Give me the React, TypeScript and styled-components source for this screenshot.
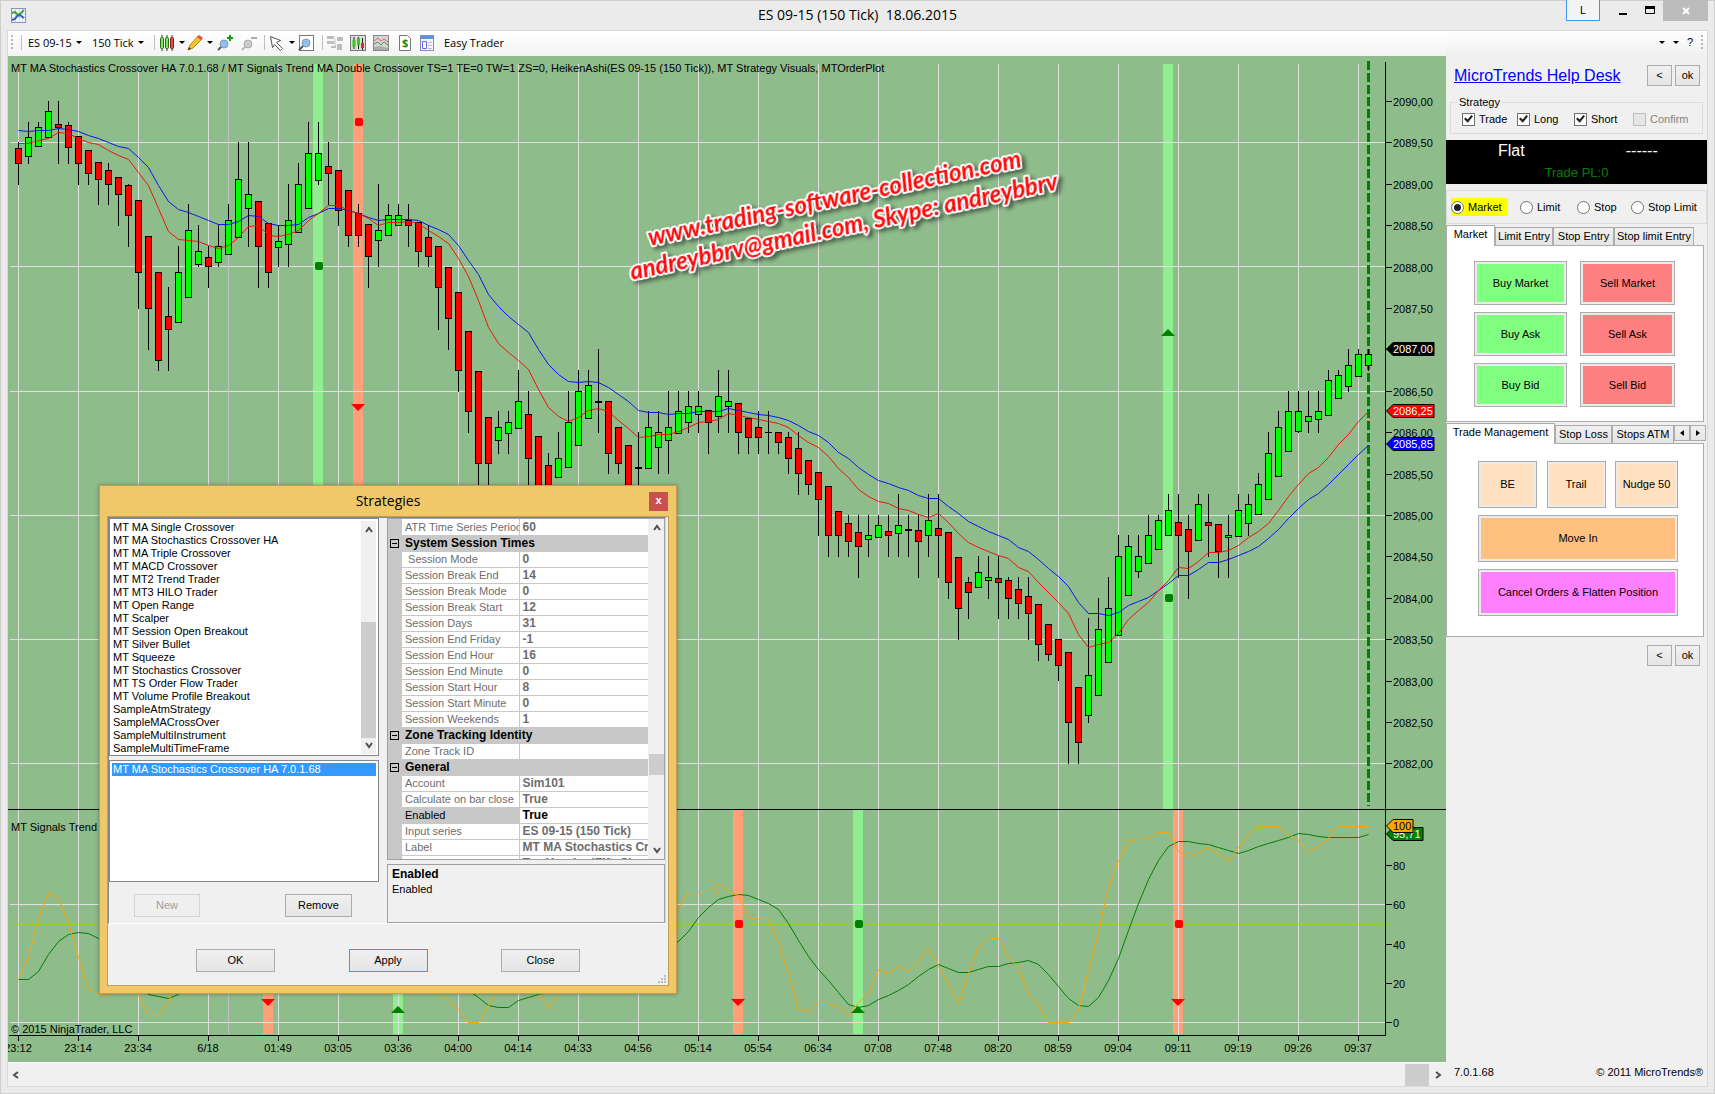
import React from "react";
import styled, { createGlobalStyle, css } from "styled-components";

const GlobalStyle = createGlobalStyle`
  * { box-sizing: border-box; }
  html, body { margin: 0; height: 100%; }
  body {
    font-family: "Liberation Sans", Arial, sans-serif;
    font-size: 11px;
    line-height: 13px;
    color: #000;
    background: #ebebeb;
    overflow: hidden;
  }
  button, input { font: inherit; color: inherit; margin: 0; }
`;

/* ---------- chart data: [high, bodyTop, bodyBottom, low, kind] ---------- */

type Candle = [number, number, number, number, "G" | "R" | "K"];

const candles: Candle[] = [
  [142, 148, 164, 185, "R"], [122, 137, 157, 164, "G"], [122, 127, 147, 147, "G"], [101, 111, 138, 138, "G"],
  [101, 124, 128, 164, "R"], [122, 125, 148, 164, "R"], [136, 136, 164, 185, "R"], [150, 150, 174, 185, "R"],
  [162, 162, 180, 205, "R"], [163, 170, 185, 205, "R"], [177, 177, 195, 226, "R"], [184, 185, 216, 247, "R"],
  [200, 200, 273, 309, "R"], [236, 236, 309, 350, "R"], [272, 272, 361, 371, "R"], [287, 316, 330, 371, "R"],
  [246, 272, 323, 323, "G"], [204, 230, 298, 298, "G"], [225, 251, 265, 267, "G"], [246, 257, 267, 288, "R"],
  [225, 246, 263, 267, "G"], [204, 220, 255, 255, "G"], [142, 179, 238, 238, "G"], [142, 194, 209, 247, "G"],
  [201, 201, 247, 288, "R"], [223, 223, 273, 288, "R"], [225, 241, 248, 267, "G"], [184, 220, 245, 267, "G"],
  [163, 184, 233, 233, "G"], [122, 153, 209, 209, "G"], [122, 153, 181, 185, "G"], [142, 166, 174, 205, "R"],
  [170, 170, 211, 226, "R"], [190, 190, 236, 247, "R"], [204, 213, 236, 247, "R"], [224, 224, 257, 288, "R"],
  [184, 230, 241, 267, "G"], [204, 215, 236, 236, "G"], [204, 215, 226, 226, "G"], [204, 220, 226, 247, "R"],
  [222, 222, 252, 267, "R"], [225, 237, 257, 267, "R"], [246, 246, 288, 330, "R"], [267, 267, 319, 350, "R"],
  [292, 292, 371, 392, "R"], [331, 331, 412, 433, "R"], [371, 371, 464, 500, "R"], [417, 417, 464, 500, "R"],
  [411, 427, 441, 454, "G"], [411, 422, 434, 454, "G"], [370, 401, 429, 429, "G"], [391, 414, 459, 490, "R"],
  [436, 436, 490, 495, "R"], [453, 465, 490, 495, "R"], [432, 458, 478, 478, "G"], [391, 422, 468, 468, "G"],
  [370, 391, 446, 446, "G"], [370, 385, 419, 419, "G"], [349, 401, 403, 433, "K"], [401, 401, 454, 474, "R"],
  [427, 427, 464, 474, "R"], [445, 445, 490, 495, "R"], [432, 467, 469, 495, "K"], [411, 427, 469, 469, "G"],
  [411, 432, 448, 474, "G"], [391, 427, 441, 474, "G"], [391, 411, 434, 434, "G"], [391, 406, 423, 433, "G"],
  [391, 406, 415, 433, "G"], [410, 410, 423, 454, "R"], [370, 396, 417, 433, "G"], [370, 401, 407, 433, "G"],
  [403, 403, 433, 454, "R"], [418, 418, 438, 454, "R"], [411, 427, 438, 454, "R"], [411, 432, 433, 454, "K"],
  [432, 432, 443, 454, "R"], [432, 437, 459, 474, "R"], [432, 448, 474, 495, "R"], [460, 460, 485, 495, "R"],
  [472, 472, 500, 536, "R"], [486, 486, 536, 557, "R"], [511, 511, 536, 557, "R"], [515, 523, 542, 557, "R"],
  [515, 532, 547, 578, "R"], [515, 535, 540, 557, "G"], [515, 525, 538, 538, "G"], [515, 531, 536, 557, "R"],
  [494, 525, 534, 557, "G"], [515, 529, 531, 557, "K"], [515, 530, 542, 578, "R"], [494, 520, 536, 557, "G"],
  [494, 528, 536, 578, "R"], [532, 532, 583, 599, "R"], [557, 557, 609, 640, "R"], [577, 582, 593, 619, "R"],
  [556, 572, 588, 588, "G"], [556, 577, 581, 599, "G"], [556, 578, 583, 619, "R"], [577, 580, 599, 619, "R"],
  [577, 589, 604, 619, "R"], [577, 596, 614, 640, "R"], [604, 604, 645, 661, "R"], [624, 624, 655, 661, "R"],
  [639, 639, 666, 681, "R"], [652, 652, 723, 764, "R"], [687, 687, 743, 764, "R"], [618, 675, 716, 723, "G"],
  [598, 629, 696, 696, "G"], [577, 608, 663, 663, "G"], [535, 556, 636, 636, "G"], [535, 546, 596, 596, "G"],
  [535, 556, 572, 578, "G"], [515, 535, 564, 564, "G"], [515, 520, 550, 550, "G"], [494, 510, 536, 536, "G"],
  [494, 522, 536, 578, "R"], [515, 529, 552, 599, "R"], [494, 504, 541, 541, "G"], [494, 522, 526, 557, "R"],
  [524, 524, 552, 578, "R"], [515, 535, 538, 578, "G"], [494, 510, 537, 537, "G"], [494, 504, 524, 536, "G"],
  [473, 484, 515, 515, "G"], [432, 453, 500, 500, "G"], [411, 427, 477, 477, "G"], [391, 411, 452, 452, "G"],
  [391, 411, 432, 433, "G"], [391, 416, 422, 433, "G"], [391, 411, 420, 433, "G"], [370, 380, 416, 416, "G"],
  [370, 375, 399, 399, "G"], [349, 365, 387, 392, "G"], [349, 354, 377, 377, "G"], [349, 354, 366, 371, "G"],
];

const slowAverage = [
  130, 131, 130, 130, 128, 129, 131, 135, 138, 142, 146, 148, 157, 167, 185, 201, 209, 212, 216, 220, 224, 224, 221,
  215, 216, 223, 225, 225, 224, 217, 213, 208, 208, 210, 213, 217, 220, 219, 219, 219, 220, 225, 229, 234, 245, 260,
  274, 294, 306, 316, 324, 332, 349, 364, 374, 381, 382, 381, 382, 387, 394, 401, 410, 412, 412, 414, 413, 413, 411,
  411, 411, 408, 410, 412, 414, 415, 417, 420, 425, 431, 435, 442, 452, 458, 467, 474, 480, 483, 487, 490, 495, 498,
  498, 506, 513, 521, 526, 531, 535, 539, 547, 551, 559, 568, 576, 586, 602, 613, 613, 615, 612, 605, 601, 597, 590,
  583, 575, 575, 569, 562, 562, 559, 555, 551, 546, 538, 529, 518, 508, 499, 493, 484, 474, 464, 454, 445,
];

const fastAverage = [
  143, 143, 140, 138, 132, 133, 138, 142, 144, 150, 155, 159, 172, 185, 208, 231, 239, 240, 241, 245, 248, 245, 237,
  226, 225, 235, 236, 234, 230, 220, 213, 205, 205, 210, 213, 218, 225, 222, 222, 221, 223, 230, 236, 243, 258, 276,
  300, 327, 343, 352, 360, 369, 389, 407, 416, 421, 417, 410, 408, 411, 420, 428, 437, 436, 434, 434, 431, 427, 422,
  421, 419, 413, 415, 417, 419, 421, 423, 427, 435, 442, 447, 456, 468, 477, 489, 496, 501, 503, 508, 510, 514, 517,
  513, 522, 533, 542, 547, 551, 555, 558, 567, 571, 582, 592, 602, 613, 634, 647, 644, 642, 633, 619, 610, 602, 590,
  580, 567, 568, 561, 552, 552, 550, 545, 537, 531, 523, 510, 496, 484, 473, 467, 457, 444, 434, 421, 411,
];

const stochK = [
  979, 957, 917, 892, 898, 922, 957, 989, 993, 996, 975, 970, 995, 1015, 1015, 1002, 975, 950, 930, 920, 915, 925, 940,
  960, 975, 980, 970, 950, 930, 910, 900, 905, 920, 940, 960, 980, 985, 975, 960, 955, 965, 980, 993, 1001, 1009, 1022,
  1022, 1005, 990, 970, 960, 970, 992, 1008, 994, 970, 940, 920, 900, 890, 895, 905, 920, 925, 920, 915, 909, 891, 891,
  891, 883, 891, 895, 916, 919, 919, 942, 973, 1009, 1011, 1003, 1003, 1006, 1015, 1002, 993, 969, 973, 966, 971, 961,
  948, 966, 984, 1003, 973, 947, 938, 938, 957, 967, 994, 1004, 1022, 1022, 1022, 1010, 970, 932, 886, 860, 840, 839,
  838, 832, 832, 851, 856, 852, 847, 853, 861, 847, 835, 826, 826, 826, 834, 840, 852, 846, 838, 826, 826, 826, 826,
];

const stochD = [
  979, 979, 971, 954, 941, 934, 932, 933, 938, 950, 965, 980, 988, 994, 996, 998, 994, 985, 970, 955, 940, 930, 925,
  925, 930, 940, 950, 955, 955, 948, 938, 928, 920, 918, 925, 935, 948, 960, 968, 970, 968, 966, 968, 974, 982, 990,
  997, 1005, 1007, 1007, 1000, 997, 994, 992, 985, 975, 965, 950, 938, 925, 915, 910, 912, 920, 935, 945, 941, 931, 917,
  907, 899, 896, 894, 895, 899, 903, 909, 923, 940, 956, 969, 980, 992, 1004, 1007, 1005, 999, 995, 990, 984, 976, 969,
  964, 968, 972, 972, 969, 966, 966, 963, 962, 960, 964, 974, 986, 998, 1005, 1006, 997, 980, 958, 930, 903, 879, 860,
  846, 841, 841, 843, 844, 847, 850, 853, 850, 846, 843, 840, 837, 833, 834, 836, 837, 837, 837, 837, 834,
];

const timeMarks: [number, string][] = [
  [18, "23:12"], [78, "23:14"], [138, "23:34"], [208, "6/18"], [278, "01:49"], [338, "03:05"], [398, "03:36"],
  [458, "04:00"], [518, "04:14"], [578, "04:33"], [638, "04:56"], [698, "05:14"], [758, "05:54"], [818, "06:34"],
  [878, "07:08"], [938, "07:48"], [998, "08:20"], [1058, "08:59"], [1118, "09:04"], [1178, "09:11"], [1238, "09:19"],
  [1298, "09:26"], [1358, "09:37"],
];

const priceMarks: [number, string][] = Array.from({ length: 17 }, (_, i) => {
  const price = 2090 - i * 0.5;
  return [Math.round(101 + i * 41.4), price.toFixed(2).replace(".", ",")];
});

const oscMarks: [number, string][] = [[865, "80"], [904, "60"], [944, "40"], [983, "20"], [1022, "0"]];

const toPoints = (ys: number[]) => ys.map((y, i) => `${18.5 + i * 10},${y + 0.5}`).join(" ");

const ChartSvg = styled.svg`
  display: block;
  flex: 1;
  width: 100%;
  min-height: 0;
  background: #8fbc8b;
  font-family: "Liberation Sans", Arial, sans-serif;
  font-size: 11px;
`;

const Watermark = styled.text`
  font-family: "Lato", sans-serif;
  font-size: 24px;
  font-weight: 700;
  font-style: italic;
  fill: #ff0a0a;
  stroke: #fff;
  stroke-width: 4px;
  stroke-linejoin: round;
  paint-order: stroke;
  filter: drop-shadow(3px 3px 2px rgba(0, 0, 0, 0.5));
`;

const Dot = ({ x, y, fill }: { x: number; y: number; fill: string }) => (
  <rect x={x - 4} y={y - 4} width="8" height="8" rx="2" fill={fill} />
);
const Down = ({ x, y }: { x: number; y: number }) => (
  <polygon points={`${x - 7},${y} ${x + 7},${y} ${x},${y + 7}`} fill="#f00" />
);
const Up = ({ x, y }: { x: number; y: number }) => (
  <polygon points={`${x - 7},${y + 7} ${x + 7},${y + 7} ${x},${y}`} fill="#008000" />
);
const Tag = ({ y, w, fill, ink, text }: { y: number; w: number; fill: string; ink: string; text: string }) => (
  <g>
    <polygon
      points={`1386.5,${y} 1393,${y - 6.5} ${1386 + w},${y - 6.5} ${1386 + w},${y + 6.5} 1393,${y + 6.5}`}
      fill={fill}
      stroke="#000"
    />
    <text x="1393" y={y + 4} fill={ink}>{text}</text>
  </g>
);

const Chart = () => (
  <ChartSvg viewBox="8 56 1438 1006" preserveAspectRatio="xMinYMin meet" role="img" aria-label="ES 09-15 chart">
    <g fill="#90ee90">
      <rect x="313" y="64" width="10" height="743" />
      <rect x="1163" y="64" width="10" height="745" />
      <rect x="393" y="810" width="10" height="224" />
      <rect x="853" y="810" width="10" height="224" />
    </g>
    <g fill="#ffa07a">
      <rect x="353" y="64" width="10" height="743" />
      <rect x="263" y="810" width="10" height="224" />
      <rect x="733" y="810" width="10" height="224" />
      <rect x="1173" y="810" width="10" height="224" />
    </g>
    <g shapeRendering="crispEdges" strokeWidth="1" fill="none">
      <g stroke="#e0e0e0">
        {timeMarks.map(([x]) => <path key={x} d={`M${x + 0.5} 64V1035`} />)}
        {[142, 266, 391, 515, 639, 763, 904, 1022].map((y) => <path key={y} d={`M10 ${y + 0.5}H1386`} />)}
      </g>
      <path d="M228.5 64V1035" stroke="#bfbfc4" />
      <path d="M9 924.5H1386" stroke="#9acd32" />
    </g>
    <path d="M1368.5 61V806" stroke="#008000" strokeWidth="3" strokeDasharray="9 3" />
    <text x="11" y="72">
      MT MA Stochastics Crossover HA 7.0.1.68 / MT Signals Trend MA Double Crossover TS=1 TE=0 TW=1 ZS=0, HeikenAshi(ES
      09-15 (150 Tick)), MT Strategy Visuals, MTOrderPlot
    </text>
    <g shapeRendering="crispEdges">
      {candles.map(([h, t, b, l, k], i) => {
        const x = 18 + i * 10;
        return (
          <g key={i}>
            <path d={`M${x + 0.5} ${h}V${l}`} stroke="#000" />
            {k === "K" ? (
              <rect x={x - 3} y={t} width="7" height={b - t} />
            ) : (
              <rect x={x - 2.5} y={t + 0.5} width="6" height={b - t - 1} fill={k === "G" ? "#0f0" : "#f00"} stroke="#000" />
            )}
          </g>
        );
      })}
    </g>
    <g fill="none">
      <polyline points={toPoints(slowAverage)} stroke="#0a14f0" />
      <polyline points={toPoints(fastAverage)} stroke="#f01408" />
      <polyline points={toPoints(stochD)} stroke="#008000" />
      <polyline points={toPoints(stochK)} stroke="#ffa500" />
    </g>
    <Dot x={359} y={122} fill="#f00" />
    <Dot x={319} y={266} fill="#008000" />
    <Dot x={1169} y={598} fill="#008000" />
    <Dot x={739} y={924} fill="#f00" />
    <Dot x={859} y={924} fill="#008000" />
    <Dot x={1179} y={924} fill="#f00" />
    <Down x={358} y={404} />
    <Down x={268} y={999} />
    <Down x={738} y={999} />
    <Down x={1178} y={999} />
    <Up x={1168} y={329} />
    <Up x={398} y={1006} />
    <Up x={858} y={1006} />
    <g shapeRendering="crispEdges" stroke="#000">
      <path d="M8 809.5H1446" />
      <path d="M9 1035.5H1386" />
      <path d="M1385.5 62V1036" />
      {timeMarks.map(([x]) => <path key={x} d={`M${x + 0.5} 1036V1041`} />)}
      {[...priceMarks, ...oscMarks].map(([y]) => <path key={y} d={`M1386 ${y + 0.5}H1392`} />)}
    </g>
    <g textAnchor="middle">
      {timeMarks.map(([x, label]) => <text key={x} x={x} y="1052">{label}</text>)}
    </g>
    {[...priceMarks, ...oscMarks].map(([y, label]) =>
      label === "2087,00" ? null : <text key={y} x="1393" y={y + 5}>{label}</text>
    )}
    <text x="11" y="831">MT Signals Trend</text>
    <text x="11" y="1033">© 2015 NinjaTrader, LLC</text>
    <Tag y={349} w={48} fill="#000" ink="#fff" text="2087,00" />
    <Tag y={411} w={48} fill="#f00" ink="#fff" text="2086,25" />
    <Tag y={444} w={48} fill="#00f" ink="#fff" text="2085,85" />
    <Tag y={834} w={37} fill="#008000" ink="#fff" text="95,71" />
    <Tag y={826} w={27} fill="#ffa500" ink="#000" text="100" />
    <Watermark transform="translate(650 246) rotate(-12)">www.trading-software-collection.com</Watermark>
    <Watermark transform="translate(632 280) rotate(-12)">andreybbrv@gmail.com, Skype: andreybbrv</Watermark>
  </ChartSvg>
);

/* ---------- window frame ---------- */

const Window = styled.div`
  position: relative;
  height: 100vh;
  display: flex;
  flex-direction: column;
  padding: 0 7px 7px;
  background: #ebebeb;
  box-shadow: inset 1px 1px #cfcfcf, inset -1px -1px #cfcfcf;
`;
const TitleBar = styled.header`
  height: 30px;
  display: grid;
  grid-template-columns: 1fr auto 1fr;
  align-items: center;
  flex: none;
`;
const AppMark = styled.svg`
  width: 15px;
  height: 15px;
  margin-left: 4px;
`;
const WindowTitle = styled.h1`
  margin: 0;
  font: 400 14px/30px "Open Sans", sans-serif;
  white-space: pre;
`;
const WindowButtons = styled.div`
  display: flex;
  justify-content: flex-end;
  align-self: start;
`;
const CaptionButton = styled.button<{ $kind?: "lang" | "close" }>`
  height: 21px;
  width: 27px;
  padding: 0;
  border: 0;
  background: none;
  display: grid;
  place-items: center;
  ${(p) => p.$kind === "lang" && css`width: 34px; margin-right: 9px; border: 1px solid #3c9bf0; border-top: 0; background: #f4f4f4; font-size: 11px;`}
  ${(p) => p.$kind === "close" && css`width: 45px; background: #bcbcbc; color: #fff;`}
`;
const Client = styled.div`
  flex: 1;
  min-height: 0;
  display: flex;
  border: 1px solid #d9d9d9;
`;
const ChartColumn = styled.main`
  flex: 1;
  min-width: 0;
  display: flex;
  flex-direction: column;
`;
const Toolbar = styled.div`
  flex: none;
  height: 25px;
  display: flex;
  align-items: center;
  padding: 0 0 2px 3px;
  background: linear-gradient(#fff, #f3f3f3);
`;
const Grip = styled.i`
  width: 2px;
  height: 15px;
  margin-right: 4px;
  background: repeating-linear-gradient(#b8b8b8 0 2px, transparent 2px 4px);
`;
const Sep = styled.i<{ $after?: number }>`
  width: 1px;
  height: 15px;
  margin: 0 ${(p) => p.$after ?? 4}px 0 4px;
  background: #bdbdbd;
`;
const ToolButton = styled.button<{ $w: number }>`
  flex: none;
  width: ${(p) => p.$w}px;
  height: 21px;
  padding: 0;
  border: 0;
  background: none;
  display: flex;
  align-items: center;
  gap: 4px;
  font: 11px/16px "Open Sans", sans-serif;
  white-space: nowrap;
`;
const Arrow = styled.i`
  border: 3px solid transparent;
  border-top-color: #000;
  border-bottom: 0;
  flex: none;
`;
const Icon = styled.svg`
  width: 16px;
  height: 16px;
  flex: none;
`;

const Lens = ({ sign, faded }: { sign?: "+" | "-"; faded?: boolean }) => (
  <Icon viewBox="0 0 16 16">
    <path d="M1 15l4-4" stroke={faded ? "#bbb" : "#555"} strokeWidth="2" />
    <circle cx="7" cy="9" r="4" fill={faded ? "#ccc" : "#8fc1ee"} stroke={faded ? "#aaa" : "#8a9aae"} />
    {sign === "+" && <path d="M13 0v6M10 3h6" stroke="#12a012" strokeWidth="2" />}
    {sign === "-" && <path d="M10 3h6" stroke="#aaa" strokeWidth="2" />}
  </Icon>
);

const ChartToolbar = () => (
  <Toolbar>
    <Grip />
    <Sep $after={6} />
    <ToolButton $w={64}>ES 09-15 <Arrow /></ToolButton>
    <ToolButton $w={58}>150 Tick <Arrow /></ToolButton>
    <Sep />
    <ToolButton $w={28} aria-label="Chart style">
      <Icon viewBox="0 0 16 16">
        <path d="M3 0v16M8 0v16M13 0v16" stroke="#333" />
        <rect x="1.500" y="2.500" width="3" height="11" rx="1" fill="#7be85c" stroke="#256b12" />
        <rect x="6.500" y="2.500" width="3" height="11" rx="1" fill="#7be85c" stroke="#256b12" />
        <rect x="11.500" y="2.500" width="3" height="11" rx="1" fill="#e84a4a" stroke="#8a1a1a" />
      </Icon>
      <Arrow />
    </ToolButton>
    <ToolButton $w={30} aria-label="Drawing tools">
      <Icon viewBox="0 0 16 16">
        <path d="M1 15l2-5 8-9 4 3-9 9z" fill="#f6c326" stroke="#b98a1a" />
        <path d="M10 2l2-2 4 3-2 2z" fill="#e0503c" />
        <path d="M1 15l1-3 2 2z" fill="#333" />
      </Icon>
      <Arrow />
    </ToolButton>
    <ToolButton $w={24} aria-label="Zoom in"><Lens sign="+" /></ToolButton>
    <ToolButton $w={19} aria-label="Zoom out" disabled><Lens sign="-" faded /></ToolButton>
    <Sep />
    <ToolButton $w={29} aria-label="Cursor">
      <Icon viewBox="0 0 16 16">
        <path d="M1.500 1.500l10 4-4 2 6 6-2 2-6-6-2 3z" fill="#fff" stroke="#555" />
      </Icon>
      <Arrow />
    </ToolButton>
    <ToolButton $w={20} aria-label="Data box">
      <Icon viewBox="0 0 16 16">
        <rect x="1.500" y=".5" width="14" height="15" fill="#fff" stroke="#777" />
        <path d="M1 15l5-5" stroke="#555" strokeWidth="2" />
        <circle cx="8" cy="8" r="4" fill="#8fc1ee" stroke="#8a9aae" />
      </Icon>
    </ToolButton>
    <Sep />
    <ToolButton $w={23} disabled aria-label="Chart trader">
      <Icon viewBox="0 0 16 16">
        <path d="M0 1h7v3H0zM0 6h7v3H0zM10 2h6v4h-6zM10 9h5v6h-5zM4 11h5v2H4z" fill="#bdbdbd" />
        <path d="M8 4v9" stroke="#bdbdbd" />
      </Icon>
    </ToolButton>
    <ToolButton $w={23} aria-label="Data series">
      <Icon viewBox="0 0 16 16">
        <rect x=".5" y=".5" width="15" height="15" fill="#ddd" stroke="#777" />
        <path d="M4 2v12M8.500 2v12M12.500 3v12" stroke="#222" />
        <path d="M2.500 5h3v7h-3zM7 3h3v7H7z" fill="#35c81f" />
        <path d="M11 8h3v5h-3z" fill="#e02a2a" />
      </Icon>
    </ToolButton>
    <ToolButton $w={24} aria-label="Indicators">
      <Icon viewBox="0 0 16 16">
        <rect x=".5" y=".5" width="15" height="15" fill="#d4d4d4" stroke="#888" />
        <path d="M1 6l4-3 3 3 3-2 4 3" fill="none" stroke="#d66" />
        <path d="M1 9l4-2 3 3 3-3 4 3" fill="none" stroke="#4a9a5a" />
        <path d="M1 15v-3l5-1 9 2v2z" fill="#aaa" />
      </Icon>
    </ToolButton>
    <ToolButton $w={22} aria-label="Strategies">
      <Icon viewBox="0 0 16 16">
        <path d="M2.500.5h8l3 3v12h-11z" fill="#fff" stroke="#777" />
        <text x="5" y="12" fontSize="11" fontWeight="700" fill="#138a13">$</text>
      </Icon>
    </ToolButton>
    <ToolButton $w={25} aria-label="Properties">
      <Icon viewBox="0 0 16 16">
        <rect x="1.500" y=".5" width="13" height="15" fill="#f4f6ff" stroke="#7f8cc0" />
        <path d="M2 1h12v3H2z" fill="#5a94d8" />
        <path d="M3.500 6.500h4v7h-4z" fill="#fff" stroke="#6a6ae8" />
        <path d="M9 7.500h4M9 10.500h4M9 13.500h4" stroke="#b8bcc8" />
      </Icon>
    </ToolButton>
    <ToolButton $w={70}>Easy Trader</ToolButton>
  </Toolbar>
);

const HScroll = styled.div`
  flex: none;
  height: 24px;
  display: flex;
  align-items: center;
  justify-content: space-between;
  padding: 0 4px;
  border-top: 1px solid #fff;
  background: #f0f0f0;
`;
const HThumb = styled.i`
  width: 24px;
  height: 22px;
  margin: 0 5px 0 auto;
  background: #cdcdcd;
`;
const Chevron = ({ d }: { d: string }) => (
  <svg width="8" height="8" viewBox="0 0 8 8" fill="none" stroke="#505050" strokeWidth="2"><path d={d} /></svg>
);
const PlainButton = styled.button`
  padding: 0;
  border: 0;
  background: none;
  display: grid;
  place-items: center;
`;

/* ---------- trader side panel ---------- */

const Panel = styled.aside`
  flex: none;
  width: 261px;
  display: flex;
  flex-direction: column;
  background: #f0f0f0;
`;
const PanelBar = styled.div`
  height: 25px;
  flex: none;
  display: flex;
  align-items: center;
  justify-content: flex-end;
  gap: 8px;
  padding: 0 0 2px;
  background: linear-gradient(#fff, #f0f0f0);
`;
const StepRow = styled.div<{ $top: number }>`
  display: flex;
  align-items: center;
  gap: 3px;
  padding: ${(p) => p.$top}px 7px 0 8px;
`;
const HelpLink = styled.a`
  font-size: 16px;
  line-height: 20px;
  color: #00f;
`;
const winButton = css`
  border: 1px solid #acacac;
  background: linear-gradient(#f0f0f0, #e5e5e5);
  padding: 0;
`;
const SmallButton = styled.button<{ $push?: boolean }>`
  ${winButton}
  width: 25px;
  height: 21px;
  margin-left: ${(p) => (p.$push ? "auto" : 0)};
`;
const StrategyBox = styled.fieldset`
  margin: 10px 4px 0;
  height: 38px;
  border: 1px solid #dcdcdc;
  padding: 0 0 0 11px;
  legend { margin-left: -5px; padding: 0 2px; line-height: 12px; }
`;
const CheckGrid = styled.div`
  display: grid;
  grid-template-columns: 55px 57px 59px 1fr;
  height: 22px;
  align-items: center;
`;
const Choice = styled.label<{ $muted?: boolean; $lit?: boolean }>`
  display: flex;
  align-items: center;
  gap: 4px;
  height: 18px;
  white-space: nowrap;
  color: ${(p) => (p.$muted ? "#838383" : "#000")};
  background: ${(p) => (p.$lit ? "#ff0" : "none")};
  padding-right: ${(p) => (p.$lit ? 6 : 0)}px;
  justify-self: start;
`;
const Check = styled.input.attrs({ type: "checkbox" })`
  appearance: none;
  flex: none;
  width: 13px;
  height: 13px;
  border: 1px solid #707070;
  background: #fff;
  display: grid;
  place-items: center;
  &:checked::after {
    content: "";
    width: 9px;
    height: 9px;
    background: #222;
    clip-path: polygon(0 50%, 18% 32%, 40% 55%, 82% 5%, 100% 20%, 42% 92%);
  }
  &:disabled { border-color: #bcbcbc; background: #e6e6e6; }
`;
const Radio = styled.input.attrs({ type: "radio" })`
  appearance: none;
  flex: none;
  width: 13px;
  height: 13px;
  border: 1px solid #707070;
  border-radius: 50%;
  background: #fff;
  display: grid;
  place-items: center;
  &:checked::after {
    content: "";
    width: 7px;
    height: 7px;
    border-radius: 50%;
    background: #222;
  }
`;
const StatusBoard = styled.div`
  margin-top: 6px;
  height: 44px;
  display: grid;
  grid-template-columns: 1fr 1fr;
  align-items: center;
  justify-items: center;
  background: #000;
  color: #fff;
  font-size: 16px;
  line-height: 20px;
  output { grid-column: 1 / -1; color: #008000; font-size: 13px; }
`;
const OrderKinds = styled.div`
  margin-top: 6px;
  height: 34px;
  display: grid;
  grid-template-columns: 69px 57px 54px 1fr;
  align-items: center;
  border: 1px solid #dcdcdc;
  padding-left: 4px;
`;
const Tabs = styled.div`
  display: flex;
  align-items: flex-end;
  height: 21px;
`;
const Tab = styled.button<{ $on?: boolean; $w: number }>`
  flex: none;
  width: ${(p) => p.$w}px;
  height: ${(p) => (p.$on ? 21 : 18)}px;
  padding: ${(p) => (p.$on ? "0 0 3px" : "0")};
  border: 1px solid #acacac;
  border-bottom: 0;
  background: ${(p) => (p.$on ? "#fff" : "linear-gradient(#f0f0f0, #e5e5e5)")};
  margin-bottom: ${(p) => (p.$on ? -1 : 0)}px;
  z-index: ${(p) => (p.$on ? 1 : 0)};
  white-space: nowrap;
  overflow: hidden;
`;
const TabArrow = styled.button`
  ${winButton}
  flex: none;
  width: 16px;
  height: 16px;
  align-self: center;
  display: grid;
  place-items: center;
`;
const Page = styled.section<{ $h: number }>`
  height: ${(p) => p.$h}px;
  margin-right: 3px;
  border: 1px solid #acacac;
  background: #fff;
`;
const EntryGrid = styled.div`
  display: grid;
  grid-template-columns: 93px 95px;
  gap: 7px 13px;
  padding: 15px 27px;
`;
const Action = styled.button<{ $fill: string; $h: number }>`
  height: ${(p) => p.$h}px;
  padding: 0;
  border: 1px solid #acacac;
  background: ${(p) => p.$fill};
  box-shadow: inset 0 0 0 2px #ebebeb;
  white-space: nowrap;
`;
const ManageGrid = styled.div`
  display: grid;
  grid-template-columns: 59px 59px 63px;
  justify-content: space-between;
  width: 200px;
  margin: 17px 31px;
  row-gap: 7px;
  ${Action}:nth-child(n + 4) { grid-column: 1 / -1; }
`;
const PanelFoot = styled.footer`
  margin-top: auto;
  display: flex;
  justify-content: space-between;
  padding: 0 4px 7px 8px;
`;

const TraderPanel = () => (
  <Panel>
    <PanelBar><Arrow /><Arrow /><span>?</span><Grip /></PanelBar>
    <StepRow $top={9}>
      <HelpLink href="#help">MicroTrends Help Desk</HelpLink>
      <SmallButton $push>&lt;</SmallButton>
      <SmallButton>ok</SmallButton>
    </StepRow>
    <StrategyBox>
      <legend>Strategy</legend>
      <CheckGrid>
        <Choice><Check defaultChecked />Trade</Choice>
        <Choice><Check defaultChecked />Long</Choice>
        <Choice><Check defaultChecked />Short</Choice>
        <Choice $muted><Check disabled />Confirm</Choice>
      </CheckGrid>
    </StrategyBox>
    <StatusBoard>
      <span>Flat</span>
      <span>------</span>
      <output>Trade PL:0</output>
    </StatusBoard>
    <OrderKinds>
      <Choice $lit><Radio name="kind" defaultChecked />Market</Choice>
      <Choice><Radio name="kind" />Limit</Choice>
      <Choice><Radio name="kind" />Stop</Choice>
      <Choice><Radio name="kind" />Stop Limit</Choice>
    </OrderKinds>
    <Tabs role="tablist">
      <Tab role="tab" $on $w={49}>Market</Tab>
      <Tab role="tab" $w={58}>Limit Entry</Tab>
      <Tab role="tab" $w={61}>Stop Entry</Tab>
      <Tab role="tab" $w={80}>Stop limit Entry</Tab>
    </Tabs>
    <Page $h={177}>
      <EntryGrid>
        {["Market", "Ask", "Bid"].map((k) => (
          <React.Fragment key={k}>
            <Action $fill="#80ff80" $h={44}>Buy {k}</Action>
            <Action $fill="#ff8080" $h={44}>Sell {k}</Action>
          </React.Fragment>
        ))}
      </EntryGrid>
    </Page>
    <Tabs role="tablist">
      <Tab role="tab" $on $w={109}>Trade Management</Tab>
      <Tab role="tab" $w={57}>Stop Loss</Tab>
      <Tab role="tab" $w={62}>Stops ATM</Tab>
      <TabArrow aria-label="Previous tabs"><svg width="4" height="6"><path d="M4 0v6L0 3z" /></svg></TabArrow>
      <TabArrow aria-label="Next tabs"><svg width="4" height="6"><path d="M0 0v6l4-3z" /></svg></TabArrow>
    </Tabs>
    <Page $h={194}>
      <ManageGrid>
        <Action $fill="#ffe0c0" $h={47}>BE</Action>
        <Action $fill="#ffe0c0" $h={47}>Trail</Action>
        <Action $fill="#ffe0c0" $h={47}>Nudge 50</Action>
        <Action $fill="#ffc080" $h={47}>Move In</Action>
        <Action $fill="#ff80ff" $h={47}>Cancel Orders &amp; Flatten Position</Action>
      </ManageGrid>
    </Page>
    <StepRow $top={8}>
      <SmallButton $push>&lt;</SmallButton>
      <SmallButton>ok</SmallButton>
    </StepRow>
    <PanelFoot><span>7.0.1.68</span><span>© 2011 MicroTrends®</span></PanelFoot>
  </Panel>
);

/* ---------- strategies dialog ---------- */

const Dialog = styled.section`
  position: absolute;
  left: 99px;
  top: 485px;
  width: 578px;
  padding: 0 7px 7px;
  background: #f0c869;
  border: 1px solid #c39f4c;
  box-shadow: 0 0 4px rgba(0, 0, 0, 0.35);
`;
const DialogHead = styled.header`
  height: 30px;
  display: grid;
  grid-template-columns: 20px 1fr 20px;
  align-items: center;
  text-align: center;
  h2 { margin: 0; font: 400 14px/30px "Open Sans", sans-serif; }
`;
const DialogClose = styled.button`
  width: 19px;
  height: 19px;
  padding: 0 0 2px;
  border: 0;
  background: #c75050;
  color: #fff;
  font-weight: 700;
`;
const DialogBody = styled.div`
  height: 470px;
  background: #f0f0f0;
  border: 1px solid #c39f4c;
`;
const Split = styled.div`
  display: grid;
  grid-template-columns: 270px 278px;
  justify-content: space-between;
  height: 407px;
  margin-right: 2px;
  border: 1px solid #828790;
  border-right-color: #d8d8d8;
  border-bottom-color: #fff;
`;
const ListBox = styled.ul<{ $h: number }>`
  display: flex;
  height: ${(p) => p.$h}px;
  margin: 0 0 4px;
  padding: 2px 2px 1px;
  border: 1px solid #828790;
  background: #fff;
  list-style: none;
  overflow: hidden;
`;
const Items = styled.li`
  flex: 1;
  min-width: 0;
`;
const Item = styled.div<{ $on?: boolean }>`
  height: 13px;
  line-height: 12px;
  padding-left: 1px;
  white-space: nowrap;
  color: ${(p) => (p.$on ? "#fff" : "#000")};
  background: ${(p) => (p.$on ? "#39f" : "none")};
`;
const VScroll = styled.div<{ $before: number; $thumb: number }>`
  flex: none;
  width: 15px;
  display: flex;
  flex-direction: column;
  align-items: center;
  justify-content: space-between;
  padding: 5px 0;
  background: #f0f0f0;
  i {
    width: 100%;
    height: ${(p) => p.$thumb}px;
    margin-top: ${(p) => p.$before}px;
    margin-bottom: auto;
    background: #cdcdcd;
  }
`;
const ListButtons = styled.div`
  display: flex;
  justify-content: space-between;
  padding: 8px 27px 0 25px;
`;
const DialogButton = styled.button<{ $w: number; $main?: boolean }>`
  ${winButton}
  width: ${(p) => p.$w}px;
  height: 23px;
  border-color: ${(p) => (p.$main ? "#39f" : "#acacac")};
  &:disabled { color: #a0a0a0; border-color: #d4d4d4; background: #efefef; }
`;
const GridFrame = styled.div`
  display: flex;
  justify-content: space-between;
  height: 342px;
  border: 1px solid #a0a0a0;
  overflow: hidden;
`;
const PropTable = styled.table`
  flex: none;
  width: 260px;
  height: max-content;
  table-layout: fixed;
  border-collapse: collapse;
  background: #fff;
  color: #6d6d6d;
  td, th {
    height: 16px;
    padding: 0 0 0 3px;
    font-weight: 400;
    text-align: left;
    line-height: 14px;
    white-space: nowrap;
    overflow: hidden;
    border-bottom: 1px solid #c8c8c8;
  }
  td:first-child { background: #c8c8c8; padding: 0 0 0 2px; }
  td:last-child { font-size: 12px; font-weight: 700; border-left: 1px solid #c8c8c8; }
`;
const HeadCell = styled.th`
  && { background: #c8c8c8; color: #000; font-size: 12px; font-weight: 700; }
`;
const Fold = styled.button`
  width: 9px;
  height: 9px;
  padding: 0;
  display: block;
  border: 1px solid #000;
  background: linear-gradient(#000, #000) center / 5px 1px no-repeat;
`;
const ActiveRow = styled.tr`
  color: #000;
  th { background: #c8c8c8; }
`;
const Help = styled.div`
  height: 59px;
  margin-top: 4px;
  padding: 2px 4px;
  border: 1px solid #a0a0a0;
  line-height: 15px;
  p { margin: 0; }
  b { font-size: 12px; }
`;
const Foot = styled.footer`
  position: relative;
  display: flex;
  justify-content: space-between;
  padding: 25px 88px 0;
`;
const Corner = styled.svg`
  position: absolute;
  right: 1px;
  bottom: -12px;
`;

const strategies = [
  "MT MA Single Crossover", "MT MA Stochastics Crossover HA", "MT MA Triple Crossover", "MT MACD Crossover",
  "MT MT2 Trend Trader", "MT MT3 HILO Trader", "MT Open Range", "MT Scalper", "MT Session Open Breakout",
  "MT Silver Bullet", "MT Squeeze", "MT Stochastics Crossover", "MT TS Order Flow Trader",
  "MT Volume Profile Breakout", "SampleAtmStrategy", "SampleMACrossOver", "SampleMultiInstrument",
  "SampleMultiTimeFrame",
];

const props: [string, string?][] = [
  ["ATR Time Series Period", "60"], ["System Session Times"], ["\u00a0Session Mode", "0"], ["Session Break End", "14"],
  ["Session Break Mode", "0"], ["Session Break Start", "12"], ["Session Days", "31"], ["Session End Friday", "-1"],
  ["Session End Hour", "16"], ["Session End Minute", "0"], ["Session Start Hour", "8"], ["Session Start Minute", "0"],
  ["Session Weekends", "1"], ["Zone Tracking Identity"], ["Zone Track ID", ""], ["General"], ["Account", "Sim101"],
  ["Calculate on bar close", "True"], ["Enabled", "True"], ["Input series", "ES 09-15 (150 Tick)"],
  ["Label", "MT MA Stochastics Crossover HA"], ["Maximum bars look back", "TwoHundredFiftySix"],
];

const StrategiesDialog = () => (
  <Dialog role="dialog" aria-labelledby="dlg-title">
    <DialogHead>
      <span />
      <h2 id="dlg-title">Strategies</h2>
      <DialogClose aria-label="Close window">x</DialogClose>
    </DialogHead>
    <DialogBody>
      <Split>
        <div>
          <ListBox $h={238}>
            <Items>{strategies.map((s) => <Item key={s}>{s}</Item>)}</Items>
            <VScroll as="li" $before={88} $thumb={116}>
              <Chevron d="M1 6l3-4 3 4" /><i /><Chevron d="M1 2l3 4 3-4" />
            </VScroll>
          </ListBox>
          <ListBox $h={122}>
            <Items><Item $on>MT MA Stochastics Crossover HA 7.0.1.68</Item></Items>
          </ListBox>
          <ListButtons>
            <DialogButton $w={66} disabled>New</DialogButton>
            <DialogButton $w={67}>Remove</DialogButton>
          </ListButtons>
        </div>
        <div>
          <GridFrame>
            <PropTable>
              <colgroup><col width="14" /><col width="117" /><col /></colgroup>
              <tbody>
                {props.map(([name, value]) =>
                  value === undefined ? (
                    <tr key={name}>
                      <td><Fold aria-label={"Collapse " + name} /></td>
                      <HeadCell colSpan={2}>{name}</HeadCell>
                    </tr>
                  ) : name === "Enabled" ? (
                    <ActiveRow key={name}><td /><th>{name}</th><td>{value}</td></ActiveRow>
                  ) : (
                    <tr key={name}><td /><th>{name}</th><td>{value}</td></tr>
                  )
                )}
              </tbody>
            </PropTable>
            <VScroll $before={222} $thumb={21}>
              <Chevron d="M1 6l3-4 3 4" /><i /><Chevron d="M1 2l3 4 3-4" />
            </VScroll>
          </GridFrame>
          <Help><p><b>Enabled</b></p><p>Enabled</p></Help>
        </div>
      </Split>
      <Foot>
        <DialogButton $w={79}>OK</DialogButton>
        <DialogButton $w={79} $main>Apply</DialogButton>
        <DialogButton $w={79}>Close</DialogButton>
        <Corner width="9" height="9" fill="#bbb">
          <path d="M6 0h2v2H6zM3 3h2v2H3zM6 3h2v2H6zM0 6h2v2H0zM3 6h2v2H3zM6 6h2v2H6z" />
        </Corner>
      </Foot>
    </DialogBody>
  </Dialog>
);

export default function App() {
  return (
    <>
      <GlobalStyle />
      <Window>
        <TitleBar>
          <AppMark viewBox="0 0 15 15">
            <rect x=".5" y=".5" width="14" height="14" fill="#f4f6ff" stroke="#8d93b8" />
            <path d="M4.500 1v13M8.500 1v13M11.500 1v13M1 5.500h13M1 9.500h13" stroke="#d5d9ee" />
            <path d="M1 5l3-1 3 3 2-1 4-4" fill="none" stroke="#3faa2a" strokeWidth="2" />
            <path d="M1 12l3-1 2-3 3-1 4 3" fill="none" stroke="#2b62c8" strokeWidth="2" />
          </AppMark>
          <WindowTitle>ES 09-15 (150 Tick)  18.06.2015</WindowTitle>
          <WindowButtons>
            <CaptionButton $kind="lang">L</CaptionButton>
            <CaptionButton aria-label="Minimize">
              <svg width="10" height="10"><path d="M1 7h8v2H1z" /></svg>
            </CaptionButton>
            <CaptionButton aria-label="Maximize">
              <svg width="10" height="9"><path d="M.5 1.500h9v6h-9z" fill="none" stroke="#000" /><path d="M0 0h10v3H0z" /></svg>
            </CaptionButton>
            <CaptionButton $kind="close" aria-label="Close">
              <svg width="8" height="8" stroke="#fff" strokeWidth="2"><path d="M1 1l6 6M7 1l-6 6" /></svg>
            </CaptionButton>
          </WindowButtons>
        </TitleBar>
        <Client>
          <ChartColumn>
            <ChartToolbar />
            <Chart />
            <HScroll>
              <PlainButton aria-label="Scroll left"><Chevron d="M6 1l-4 3 4 3" /></PlainButton>
              <HThumb />
              <PlainButton aria-label="Scroll right"><Chevron d="M2 1l4 3-4 3" /></PlainButton>
            </HScroll>
          </ChartColumn>
          <TraderPanel />
        </Client>
        <StrategiesDialog />
      </Window>
    </>
  );
}
